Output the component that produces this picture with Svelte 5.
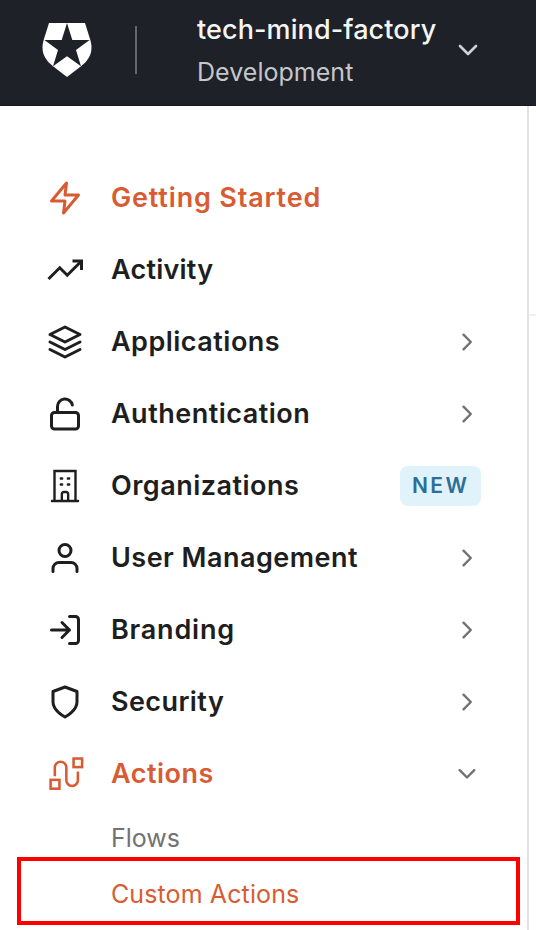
<script>
  const items = [
    { label: 'Getting Started', icon: 'bolt', active: true, spacing: 0.83 },
    { label: 'Activity', icon: 'trend', spacing: 0.22 },
    { label: 'Applications', icon: 'layers', chevron: 'right', spacing: 0.48 },
    { label: 'Authentication', icon: 'lock', chevron: 'right', spacing: 0.48 },
    { label: 'Organizations', icon: 'building', badge: 'NEW', spacing: 0.48 },
    { label: 'User Management', icon: 'user', chevron: 'right', spacing: 0.48 },
    { label: 'Branding', icon: 'login', chevron: 'right', spacing: 0.78 },
    { label: 'Security', icon: 'shield', chevron: 'right', spacing: 0.42 },
    { label: 'Actions', icon: 'flow', chevron: 'down', active: true, spacing: 0.5 }
  ];
</script>

<div class="page">
  <header>
    <svg class="logo" width="50" height="54" viewBox="42 23 50 54">
      <path fill="#fff" d="M49 23H85L90.200 39.500C94 52 89 60 81 66.300L67 77L53 66.300C45 60 40 52 43.800 39.500Z" />
      <path fill="#1e2128" d="M67 23L72.300 40H89.600L76 50L81 66.300L67 56.300L53 66.300L58 50L44.400 40H61.700Z" />
    </svg>
    <span class="divider"></span>
    <div class="tenant">
      <span class="name">tech-mind-factory</span>
      <span class="env">Development</span>
    </div>
    <svg class="tenant-arrow" width="20" height="12" viewBox="-10 -6 20 12"><path d="M-8 -4L0 4L8 -4" /></svg>
  </header>
  <div class="body">
    <nav>
      {#each items as item}
        <a class="row" class:active={item.active}>
          <svg class="icon" width="36" height="36" viewBox="0 0 24 24">
            {#if item.icon === 'bolt'}
              <path d="M13 2L3 14H12L11 22L21 10H12Z" />
            {:else if item.icon === 'trend'}
              <g class="sharp"><path d="M23 6L13.500 15.500L8.500 10.500L1 18" /><path d="M17 6H23V12" /></g>
            {:else if item.icon === 'layers'}
              <path d="M12 2L2 7L12 12L22 7ZM2 17L12 22L22 17M2 12L12 17L22 12" />
            {:else if item.icon === 'lock'}
              <rect x="3" y="11" width="18" height="11" rx="2" /><path d="M7 11V7A5 5 0 0 1 16.900 6" />
            {:else if item.icon === 'building'}
              <g class="thin">
                <path d="M5 22V2H19V22M3.300 22H20.700M9.900 22V17.300A1.300 1.300 0 0 1 11.200 16H12.800A1.300 1.300 0 0 1 14.100 17.300V22" />
                <path d="M9.200 7H10.100M13.900 7H14.800M9.200 11H10.100M13.900 11H14.800" />
              </g>
            {:else if item.icon === 'user'}
              <circle cx="12" cy="7" r="4" /><path d="M20 21V19A4 4 0 0 0 16 15H8A4 4 0 0 0 4 19V21" />
            {:else if item.icon === 'login'}
              <path d="M15 3H19A2 2 0 0 1 21 5V19A2 2 0 0 1 19 21H15M10 17L15 12L10 7M15 12H3" />
            {:else if item.icon === 'shield'}
              <path d="M12 22S20 18 20 12V5L12 2L4 5V12C4 18 12 22 12 22Z" />
            {:else}
              <g class="route">
                <rect x="17.700" y="1.700" width="5.700" height="5.700" /><rect x="2.400" y="15.900" width="5.900" height="5.900" />
                <path d="M5.200 13.500V7.700A3.850 3.850 0 0 1 12.900 7.700V16.100A3.850 3.850 0 0 0 20.600 16.100V10.400" />
              </g>
            {/if}
          </svg>
          <span class="label" style:letter-spacing="{item.spacing}px">{item.label}</span>
          {#if item.badge}<span class="badge">{item.badge}</span>{/if}
          {#if item.chevron}
            <svg class="chevron" width="20" height="20" viewBox="-10 -10 20 20">
              <path d={item.chevron === 'right' ? 'M-3.500 -7.300L3.800 0L-3.500 7.300' : 'M-7.300 -3.800L0 3.500L7.300 -3.800'} />
            </svg>
          {/if}
        </a>
      {/each}
      <div class="sub">
        <a class="flows">Flows</a>
        <a class="custom">Custom Actions</a>
      </div>
    </nav>
    <main><div class="toolbar"></div></main>
  </div>
</div>

<style>
  :global(body) { margin: 0; background: #fff; }
  .page { width: 536px; height: 930px; display: flex; flex-direction: column; overflow: hidden; font-family: Inter, "Liberation Sans", sans-serif; }
  header { height: 106px; flex: none; box-sizing: border-box; display: flex; align-items: flex-start; background: #1e2128; border-bottom: 1px solid #16191f; }
  .logo { margin: 23px 0 0 42px; }
  .divider { width: 2px; height: 48px; margin: 26px 0 0 43px; background: #65676b; }
  .tenant { display: flex; flex-direction: column; width: 261px; margin: 9px 0 0 60px; white-space: nowrap; }
  .name { font-size: 27px; line-height: 42px; font-weight: 500; color: #f4f5f5; letter-spacing: .1px; }
  .env { font-size: 25px; line-height: 42px; color: #c5c7ca; letter-spacing: .03px; }
  .tenant-arrow { margin-top: 44px; fill: none; stroke: #d0d1d4; stroke-width: 2.6; stroke-linecap: round; stroke-linejoin: round; }
  .body { display: flex; flex: 1; }
  nav { width: 527px; padding-top: 56px; border-right: 2px solid #e2e2e2; }
  main { flex: 1; }
  .toolbar { height: 208px; border-bottom: 2px solid #f1f1f1; }
  .row { height: 72px; display: flex; align-items: center; padding: 0 46px 0 47px; color: #1e1e1e; }
  .active { color: #d85c33; }
  .icon { overflow: visible; fill: none; stroke: currentColor; stroke-width: 2; stroke-linecap: round; stroke-linejoin: round; }
  .sharp { stroke-linecap: butt; stroke-linejoin: miter; }
  .thin { stroke-width: 1.600; stroke-linejoin: miter; }
  .route { stroke-width: 1.700; stroke-linecap: butt; stroke-linejoin: miter; }
  .label { flex: 1; margin-left: 28px; font-size: 27px; line-height: 36px; font-weight: 600; white-space: nowrap; }
  .chevron { margin-right: 4px; fill: none; stroke: #727272; stroke-width: 2.4; stroke-linecap: round; stroke-linejoin: round; }
  .badge { width: 81px; height: 40px; box-sizing: border-box; padding-left: 12px; border-radius: 8px; background: #e0f3fb; color: #2e6e96; font-size: 21px; line-height: 40px; font-weight: 600; letter-spacing: 2.4px; }
  .sub { display: flex; flex-direction: column; font-size: 25px; white-space: nowrap; }
  .flows { height: 47px; line-height: 56px; padding-left: 111px; color: #727272; letter-spacing: 0; }
  .custom { box-sizing: border-box; width: 503px; height: 68px; margin-left: 17px; padding-left: 90px; border: 4px solid #f00; line-height: 66px; color: #d85c33; letter-spacing: .11px; }
</style>
